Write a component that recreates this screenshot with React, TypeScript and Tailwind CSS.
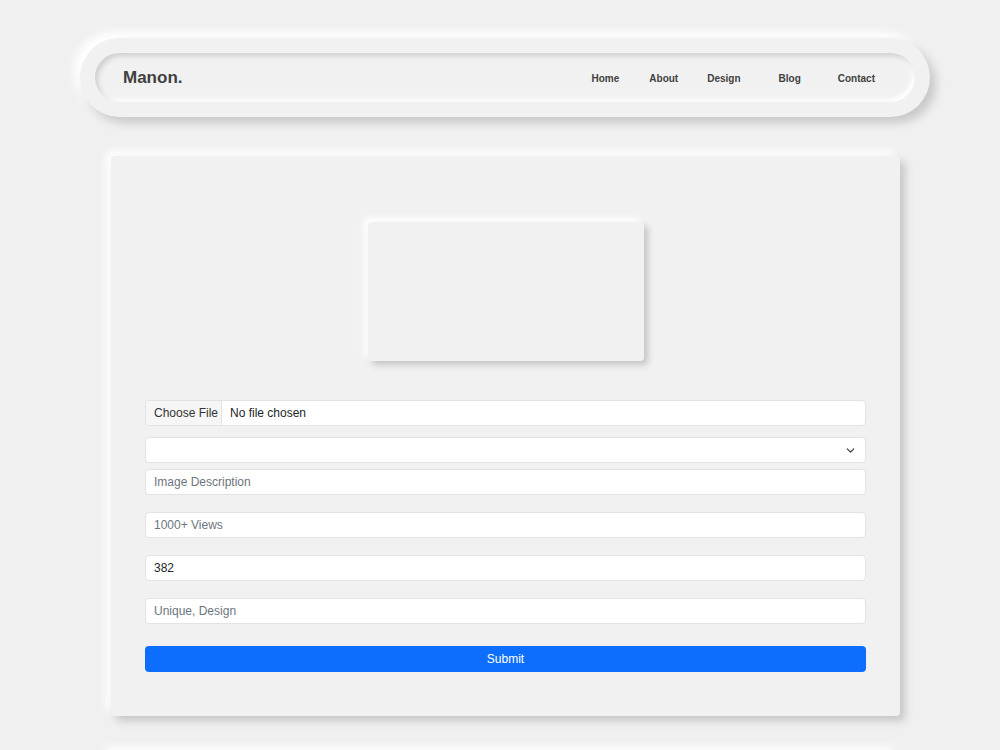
import React from "react";
import { ChevronDown } from "lucide-react";

const fieldBase =
  "h-[26px] w-full rounded-[4px] border border-[#e3e3e3] bg-white px-2 text-[12px] leading-[24px] text-[#212529] outline-none placeholder:text-[#6c757d]";

const NavBar: React.FC = () => {
  const links = [
    { label: "Home", ml: "ml-0" },
    { label: "About", ml: "ml-[30px]" },
    { label: "Design", ml: "ml-[29px]" },
    { label: "Blog", ml: "ml-[38px]" },
    { label: "Contact", ml: "ml-[37px]" },
  ];

  return (
    <nav className="ml-[80px] mt-[38px] w-[850px] rounded-full bg-[#f1f1f1] p-[15px] shadow-[6px_6px_10px_#c9c9c9,-6px_-6px_10px_#ffffff]">
      <div className="flex h-[49px] items-center justify-between rounded-full pl-[28px] pr-[40px] shadow-[inset_3px_3px_5px_#d0d0d0,inset_-3px_-3px_5px_#ffffff]">
        <span className="text-[17px] font-bold text-[#404040]">Manon.</span>
        <ul className="-mt-[2px] flex items-center">
          {links.map((l) => (
            <li key={l.label} className={l.ml}>
              <a href="#" className="text-[10px] font-bold text-[#3f3f3f]">
                {l.label}
              </a>
            </li>
          ))}
        </ul>
      </div>
    </nav>
  );
};

const UploadForm: React.FC = () => {
  return (
    <form className="flex flex-col" onSubmit={(e) => e.preventDefault()}>
      {/* file picker */}
      <div className="flex h-[26px] w-full items-center overflow-hidden rounded-[4px] border border-[#e3e3e3] bg-white text-[12px] text-[#212529]">
        <span className="flex h-full w-[76px] items-center border-r border-[#e3e3e3] bg-[#f6f6f6] pl-2 text-[#333]">
          Choose File
        </span>
        <span className="pl-[8px]">No file chosen</span>
      </div>

      {/* select */}
      <div className="mt-[11px] flex h-[26px] w-full items-center justify-end rounded-[4px] border border-[#e3e3e3] bg-white pr-[8px]">
        <ChevronDown size={13} strokeWidth={2.2} className="text-[#343a40]" />
      </div>

      <input className={`mt-[6px] ${fieldBase}`} placeholder="Image Description" />
      <input className={`mt-[17px] ${fieldBase}`} placeholder="1000+ Views" />
      <input className={`mt-[17px] ${fieldBase}`} defaultValue="382" />
      <input className={`mt-[17px] ${fieldBase}`} placeholder="Unique, Design" />

      <button
        type="submit"
        className="mt-[22px] h-[26px] w-full rounded-[4px] bg-[#0d6efd] text-[12px] text-white"
      >
        Submit
      </button>
    </form>
  );
};

export default function App() {
  return (
    <div
      className="h-[750px] w-full overflow-hidden bg-[#f0f0f0]"
      style={{ fontFamily: '"Liberation Sans", Arial, sans-serif' }}
    >
      <NavBar />

      <section className="ml-[111px] mt-[39px] w-[789px] rounded-[4px] bg-[#f1f1f1] px-[34px] pb-[44px] pt-[66px] shadow-[5px_5px_8px_#c6c6c6,-5px_-5px_8px_#ffffff]">
        <div className="mx-auto h-[139px] w-[276px] rounded-[4px] bg-[#f1f1f1] shadow-[4px_4px_6px_#c6c6c6,-4px_-4px_6px_#ffffff]" />
        <div className="mt-[39px]">
          <UploadForm />
        </div>
      </section>

      <section className="ml-[111px] mt-[36px] h-[300px] w-[789px] rounded-[4px] bg-[#f1f1f1] shadow-[5px_5px_8px_#c6c6c6,-5px_-5px_8px_#ffffff]" />
    </div>
  );
}
